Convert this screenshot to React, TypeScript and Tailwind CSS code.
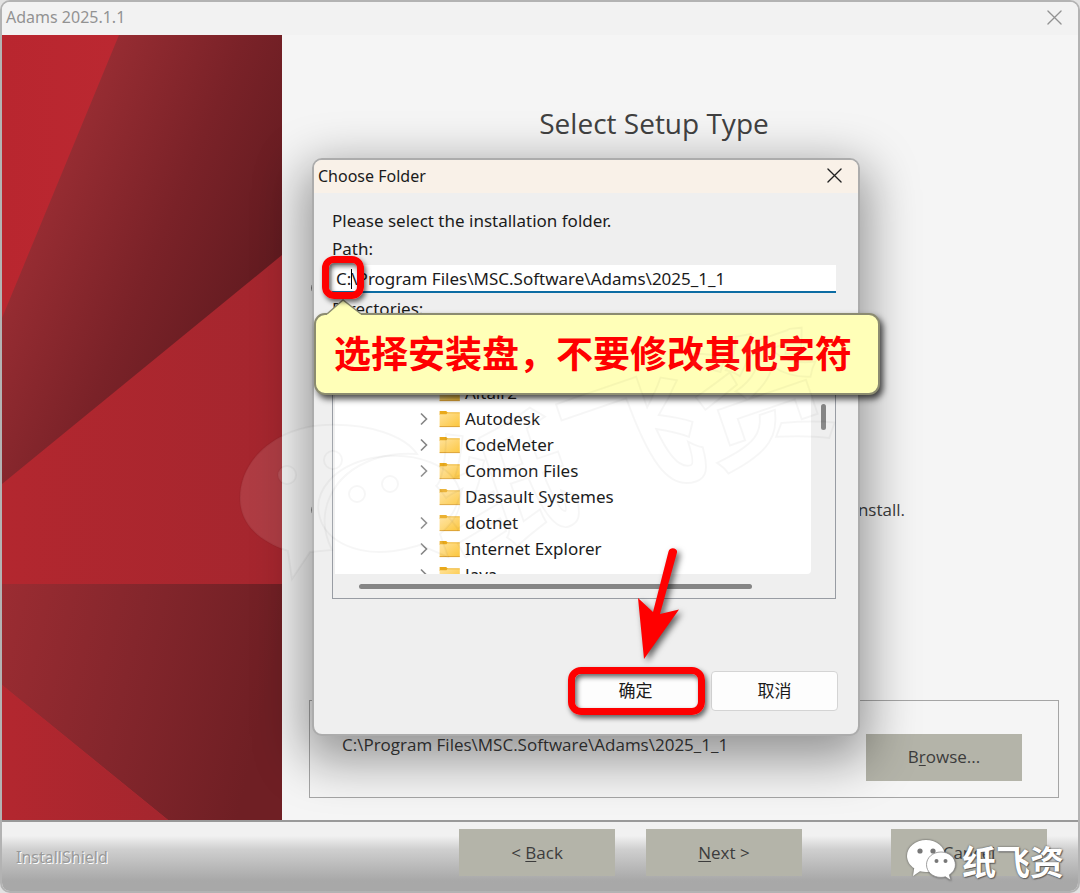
import React from "react";

const folders = [
  { name: "Altair2", expandable: false },
  { name: "Autodesk", expandable: true },
  { name: "CodeMeter", expandable: true },
  { name: "Common Files", expandable: true },
  { name: "Dassault Systemes", expandable: false },
  { name: "dotnet", expandable: true },
  { name: "Internet Explorer", expandable: true },
  { name: "Java", expandable: true },
];

function CloseIcon({ className }: { className: string }) {
  return (
    <svg viewBox="0 0 16 16" className={className} fill="none" stroke="currentColor" strokeWidth="1.4" strokeLinecap="round">
      <path d="M1 1 15 15M15 1 1 15" />
    </svg>
  );
}

function Chevron() {
  return (
    <svg viewBox="0 0 10 14" className="h-[14px] w-[10px]" fill="none" stroke="#858585" strokeWidth="1.6">
      <path d="M2 1.5 7.5 7 2 12.5" />
    </svg>
  );
}

function FolderIcon() {
  return (
    <svg viewBox="0 0 22 18" className="h-[18px] w-[22px] shrink-0">
      <defs>
        <linearGradient id="folderFill" x1="0" y1="0" x2="1" y2="1">
          <stop offset="0" stopColor="#ffe29a" />
          <stop offset="1" stopColor="#fcc63c" />
        </linearGradient>
      </defs>
      <path d="M.6 1h6.600l1.200 1.200V5H.6Z" fill="#e9a91b" />
      <path d="M.6 4.200h6.800l1.200-1.200H20.800v13.600H.6Z" fill="url(#folderFill)" />
      <path d="M8 2.800H20.800" stroke="#efb52f" strokeWidth="1" />
      <path d="M.6 16.600h20.200" stroke="#dc9f2e" strokeWidth="1" />
    </svg>
  );
}

function Artwork() {
  return (
    <svg viewBox="0 0 280 785" preserveAspectRatio="none" className="block h-full w-full">
      <defs>
        <linearGradient id="red" x1="0" y1="0" x2="1" y2="0">
          <stop offset="0" stopColor="#b9262f" />
          <stop offset="1" stopColor="#bd2b34" />
        </linearGradient>
        <linearGradient id="dark" gradientUnits="userSpaceOnUse" x1="40" y1="150" x2="280" y2="250">
          <stop offset="0" stopColor="#992d33" />
          <stop offset=".5" stopColor="#7a2228" />
          <stop offset="1" stopColor="#5f1a1f" />
        </linearGradient>
        <linearGradient id="mid" x1="0" y1="0" x2="1" y2="0">
          <stop offset="0" stopColor="#b3272f" />
          <stop offset="1" stopColor="#a4262e" />
        </linearGradient>
        <linearGradient id="low" x1="0" y1="0" x2="1" y2=".2">
          <stop offset="0" stopColor="#9b2c32" />
          <stop offset=".5" stopColor="#84262c" />
          <stop offset="1" stopColor="#6f1f24" />
        </linearGradient>
      </defs>
      <rect width="280" height="785" fill="url(#red)" />
      <path d="M117 0H280V222L0 450V283Z" fill="url(#dark)" />
      <path d="M280 220V549H0V449Z" fill="url(#mid)" />
      <path d="M0 549H280V785H166L0 650Z" fill="url(#low)" />
      <path d="M0 650 166 785H0Z" fill="url(#mid)" />
    </svg>
  );
}

function SetupButton({ before, hot, after }: { before: string; hot: string; after: string }) {
  return (
    <button type="button" className="h-[47px] w-[156px] shrink-0 bg-[#b4b4a9] text-[17px] text-[#3c3c3c]">
      {before}
      <span className="underline underline-offset-2">{hot}</span>
      {after}
    </button>
  );
}

function ChatBubbles() {
  return (
    <svg viewBox="0 0 50 44" className="h-[44px] w-[50px] drop-shadow-[0_0_1px_#555]">
      <path
        d="M20 1C9.500 1 1 8 1 17c0 5 2.800 9.400 7.200 12.300L7 37l7-4.800c2 .6 4 .8 6 .8C31 33 39 26 39 17S31 1 20 1Z"
        fill="#fff"
      />
      <circle cx="14" cy="12" r="2.600" fill="#777" />
      <circle cx="27" cy="12" r="2.600" fill="#777" />
      <path
        d="M35 13c-8.400 0-14.500 5.700-14.500 12.700S26.600 38.400 35 38.400c1.500 0 3-.2 4.400-.6l5.400 3.600-1.400-5.600c3.700-2.400 6-6 6-10.100C49.400 18.700 43.400 13 35 13Z"
        fill="#fff"
        stroke="#888"
        strokeWidth=".8"
      />
      <circle cx="30.500" cy="22" r="2" fill="#777" />
      <circle cx="39.500" cy="22" r="2" fill="#777" />
    </svg>
  );
}

function FaintStamp() {
  return (
    <svg
      viewBox="0 0 640 300"
      aria-hidden="true"
      className="pointer-events-none absolute top-[298px] left-[228px] h-[300px] w-[640px] overflow-visible"
    >
      <g fill="#ffffff" fillOpacity=".1" stroke="#000000" strokeOpacity=".035" strokeWidth="2">
        <path d="M95 125C45 128 10 160 10 198c0 24 16 42 48 53l4 28 18-27 22-2c-18-36-2-75 42-91 15-5 29-6 43-5-12-18-48-31-92-29Z" />
        <circle cx="57" cy="175" r="9" />
        <circle cx="103" cy="160" r="9" />
        <path d="M142 158c-38 8-60 34-52 60 7 24 38 38 74 33 14-2 22-5 26-6l28 12-8-23c14-12 23-25 20-42-6-26-44-42-88-34Z" />
        <circle cx="127" cy="194" r="8" />
        <circle cx="160" cy="184" r="8" />
      </g>
      <text
        x="226"
        y="254"
        transform="rotate(-19 226 254)"
        className="font-['Noto_Sans_CJK_SC',sans-serif] text-[136px] font-bold"
        fill="#ffffff"
        fillOpacity=".04"
        stroke="#000000"
        strokeOpacity=".035"
        strokeWidth="2"
      >
        纸飞资
      </text>
    </svg>
  );
}

function ChooseFolderDialog() {
  return (
    <section
      role="dialog"
      aria-labelledby="dialog-title"
      className="absolute top-[156px] left-[310px] flex h-[578px] w-[548px] flex-col rounded-[10px] border-2 border-[#acacac] bg-[#efefef] font-['Noto_Sans','Noto_Sans_CJK_SC',sans-serif] text-[17px] leading-6 text-[#1b1b1b] shadow-[0_16px_50px_8px_rgba(0,0,0,0.4)]"
    >
      <header className="flex h-[33px] shrink-0 items-center justify-between rounded-t-lg bg-[#f9f1e8] pr-4 pb-0.5 pl-1">
        <h2 id="dialog-title" className="text-base">Choose Folder</h2>
        <button type="button" aria-label="Close" className="text-[#222]">
          <CloseIcon className="size-[15px]" />
        </button>
      </header>
      <div className="flex flex-1 flex-col px-[18px] pt-4">
        <p>Please select the installation folder.</p>
        <label htmlFor="path" className="mt-1">Path:</label>
        <div className="relative mt-1 mr-1">
          <input
            id="path"
            defaultValue="C:\Program Files\MSC.Software\Adams\2025_1_1"
            className="block h-7 w-full border-b-2 border-[#0c6ca3] bg-white pl-1 outline-none"
          />
          <span className="absolute top-1 left-[19px] h-5 w-px bg-black" />
        </div>
        <h3 id="tree-title" className="mt-1">Directories:</h3>
        <div className="mt-1 mr-1 flex h-[274px] flex-col border border-[#989ca3] pl-0.5">
          <div className="flex min-h-0 flex-1">
            <ul aria-labelledby="tree-title" className="flex flex-1 flex-col justify-end overflow-hidden rounded-br-sm bg-white">
              {folders.map((folder) => (
                <li key={folder.name} className="flex h-[26px] shrink-0 items-center pl-[84px] last:-mb-3.5">
                  <span className="w-5">{folder.expandable && <Chevron />}</span>
                  <FolderIcon />
                  <span className="pl-1">{folder.name}</span>
                </li>
              ))}
            </ul>
            <div className="flex w-6 flex-col items-center pt-[78px]">
              <span className="h-[26px] w-[5px] rounded-full bg-[#858585]" />
            </div>
          </div>
          <div className="flex h-6 items-center pl-6">
            <span className="h-[5px] w-[393px] rounded-full bg-[#858585]" />
          </div>
        </div>
      </div>
      <footer className="flex justify-end gap-3 pr-5 pb-[23px]">
        <button type="button" className="h-10 w-[127px] rounded border border-[#d4d4d4] bg-[#fdfdfd]">确定</button>
        <button type="button" className="h-10 w-[127px] rounded border border-[#d4d4d4] bg-[#fdfdfd]">取消</button>
      </footer>
    </section>
  );
}

function Annotations() {
  return (
    <>
      <div className="absolute top-[311px] left-[312px] flex h-[82px] w-[566px] items-center rounded-[11px] border-2 border-[#8b8b70] bg-[#ffffb8] pb-0.5 pl-[18px] font-['Noto_Sans_CJK_SC',sans-serif] text-[37px] font-bold whitespace-nowrap text-[#ff0000] shadow-[3px_4px_6px_rgba(0,0,0,0.7)]">
        选择安装盘，不要修改其他字符
      </div>
      <svg viewBox="0 0 40 18" className="absolute top-[296px] left-[323px] h-[18px] w-10">
        <path d="M2 18V16L18 2 36 16V18Z" fill="#ffffb8" />
        <path d="M2 16 18 2 36 16" fill="none" stroke="#8b8b70" strokeWidth="1.500" />
      </svg>
      <div className="absolute top-[254px] left-[320px] h-[43px] w-[42px] rounded-xl border-[7px] border-[#fe0000] shadow-[2px_3px_5px_rgba(0,0,0,0.6),inset_2px_3px_5px_rgba(0,0,0,0.6)]" />
      <div className="absolute top-[665px] left-[566px] h-[48px] w-[137px] rounded-[13px] border-[7px] border-[#fe0000] shadow-[2px_3px_5px_rgba(0,0,0,0.6),inset_2px_3px_5px_rgba(0,0,0,0.6)]" />
      <svg viewBox="0 0 60 125" className="absolute top-[538px] left-[628px] h-[125px] w-[60px] drop-shadow-[3px_3px_3px_rgba(0,0,0,0.6)]">
        <path d="M38.500 11.500C40 6 48 8 47 12.500L30 74 49 69.500 14 119 8 58 23 72Z" fill="#ff0000" />
      </svg>
    </>
  );
}

export default function App() {
  return (
    <div className="bg-[#e2e2e2]">
      <main className="relative flex min-h-screen flex-col overflow-hidden rounded-[10px] border-2 border-[#b3b3b3] bg-[#f5f5f5] font-['Open_Sans',sans-serif] text-[#3c3c3c]">
        <header className="flex h-[33px] shrink-0 items-center justify-between bg-[#f2f2f2] pr-4 pb-[3px] pl-1 font-['Noto_Sans',sans-serif] text-base text-[#929292]">
          <h1>Adams 2025.1.1</h1>
          <button type="button" aria-label="Close window">
            <CloseIcon className="size-[15px]" />
          </button>
        </header>
        <div className="flex flex-1">
          <div className="relative w-[280px] shrink-0">
            <div className="absolute inset-0">
              <Artwork />
            </div>
          </div>
          <div className="flex flex-1 flex-col pt-[68px] pr-[19px] pb-[22px] pl-[27px]">
            <h2 className="pr-[60px] text-center text-[28px] leading-10 font-medium text-[#414141]">Select Setup Type</h2>
            <div className="mt-[133px] flex h-6 items-center pl-0.5">
              <input type="radio" name="setup" aria-label="Typical" className="size-4" />
            </div>
            <div className="mt-[198px] flex h-6 items-center justify-between pr-[154px] pl-0.5 text-[17px]">
              <input id="custom" type="radio" name="setup" className="size-4" />
              <label htmlFor="custom">install.</label>
            </div>
            <div className="mt-auto flex h-[98px] items-center justify-between border border-[#a5a5a5] pt-4 pr-9 pl-8 text-[17px]">
              <span className="pb-6">C:\Program Files\MSC.Software\Adams\2025_1_1</span>
              <SetupButton before="B" hot="r" after="owse..." />
            </div>
          </div>
        </div>
        <footer className="flex h-[71px] shrink-0 items-start border-t-2 border-[#999] bg-linear-to-b from-[#f1f1f1] from-20% via-[#cfcfcf] via-40% to-[#a8a8a8] to-85% pt-[7px] pr-[31px] pl-3.5">
          <span className="mt-4 flex-1 font-['Noto_Sans',sans-serif] text-base text-[#999] [text-shadow:1px_1px_0_#fff]">InstallShield</span>
          <div className="flex gap-[31px] pr-[89px]">
            <SetupButton before="< " hot="B" after="ack" />
            <SetupButton before="" hot="N" after="ext >" />
          </div>
          <SetupButton before="Cancel" hot="" after="" />
        </footer>
        <ChooseFolderDialog />
        <Annotations />
        <FaintStamp />
        <div className="absolute right-3.5 bottom-2 flex items-center gap-1.5">
          <ChatBubbles />
          <span className="font-['Noto_Sans_CJK_SC',sans-serif] text-[34px] leading-10 font-bold text-white [text-shadow:0_0_2px_#444,1px_1px_1px_#666]">纸飞资</span>
        </div>
      </main>
    </div>
  );
}
